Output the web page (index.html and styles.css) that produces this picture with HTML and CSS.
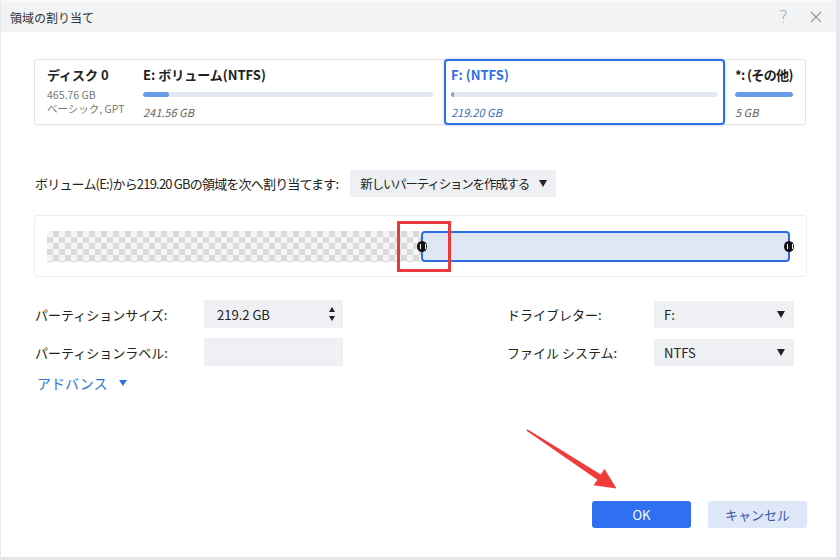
FILE: index.html
```html
<!DOCTYPE html>
<html lang="ja">
<head>
<meta charset="utf-8">
<link rel="stylesheet" href="styles.css">
</head>
<body>
<div class="window">
  <div class="titlebar">
    <span class="title">領域の割り当て</span>
    <div class="tb-icons">
      <span class="help">?</span>
      <svg class="close" width="12" height="12" viewBox="0 0 12 12"><path d="M1 1L11 11M11 1L1 11" stroke="#9a9a9a" stroke-width="1.2" fill="none"/></svg>
    </div>
  </div>
  <div class="content">
    <div class="disk-card">
      <div class="col disk-info">
        <div class="d-title">ディスク 0</div>
        <div class="d-sub">465.76 GB</div>
        <div class="d-sub">ベーシック, GPT</div>
      </div>
      <div class="col part part-e">
        <div class="p-title">E: ボリューム(NTFS)</div>
        <div class="bar"><div class="fill" style="width:9%"></div></div>
        <div class="p-size">241.56 GB</div>
      </div>
      <div class="col part part-f">
        <div class="p-title">F: (NTFS)</div>
        <div class="bar"><div class="fill thin" style="width:1%"></div></div>
        <div class="p-size">219.20 GB</div>
      </div>
      <div class="col part part-o">
        <div class="p-title">*: (その他)</div>
        <div class="bar"><div class="fill" style="width:100%"></div></div>
        <div class="p-size">5 GB</div>
      </div>
    </div>

    <div class="alloc-row">
      <span class="alloc-label">ボリューム(E:)から219.20 GBの領域を次へ割り当てます:</span>
      <div class="select alloc-select"><span class="sel-text">新しいパーティションを作成する</span><span class="caret"></span></div>
    </div>

    <div class="slider-panel">
      <div class="free-area"></div>
      <div class="part-area">
        <span class="handle left"></span>
        <span class="handle right"></span>
      </div>
      <div class="annot-box"></div>
    </div>

    <div class="form">
      <span class="f-label">パーティションサイズ:</span>
      <div class="input spin"><span>219.2 GB</span>
        <span class="spinner"><span class="up"></span><span class="down"></span></span>
      </div>
      <span></span>
      <span class="f-label">ドライブレター:</span>
      <div class="select"><span>F:</span><span class="caret"></span></div>

      <span class="f-label">パーティションラベル:</span>
      <div class="input"></div>
      <span></span>
      <span class="f-label">ファイル システム:</span>
      <div class="select"><span>NTFS</span><span class="caret"></span></div>
    </div>

    <div class="advanced">アドバンス <span class="adv-caret"></span></div>

    <div class="buttons">
      <button class="btn ok">OK</button>
      <button class="btn cancel">キャンセル</button>
    </div>

    <svg class="arrow" width="110" height="80" viewBox="0 0 110 80">
      <polygon points="7.4,9.2 80.8,54.4 84.5,49 96.5,68.5 73.6,65.3 77.4,59.8 6.6,10.8" fill="#f03b3b"/>
    </svg>
  </div>
</div>
</body>
</html>
```

FILE: styles.css
```css
* { box-sizing: border-box; }
html, body { margin: 0; padding: 0; }
body {
  width: 840px;
  height: 560px;
  background: #e6e7ea;
  font-family: "Noto Sans CJK JP", "Noto Sans", sans-serif;
  color: #222;
  overflow: hidden;
}
.window {
  width: 835px;
  height: 557px;
  margin-left: 1px;
  background: #fff;
  position: relative;
}
.titlebar {
  height: 32px;
  background: #f2f3f5;
  border-top: 2px solid #f7f8f9;
  display: flex;
  align-items: center;
  justify-content: space-between;
  padding: 0 14px 0 9px;
}
.title { font-size: 12px; color: #333; }
.tb-icons { display: flex; align-items: center; gap: 22px; }
.help { font-size: 17px; color: #a0a0a0; font-family: "DejaVu Sans", sans-serif; font-weight: 300; }
.content {
  padding: 27px 0 0 33px;
  position: relative;
  height: 525px;
}
.disk-card {
  width: 772px;
  height: 66px;
  border: 1px solid #e1e3e6;
  border-radius: 3px;
  display: grid;
  grid-template-columns: 108px 301px 281px 1fr;
  box-shadow: 0 1px 2px rgba(0,0,0,0.04);
}
.col { padding-top: 6px; white-space: nowrap; }
.disk-info { padding-left: 12px; }
.d-title, .p-title { font-size: 13px; font-weight: 700; line-height: 18px; color: #222; }
.d-sub { font-size: 10.5px; line-height: 14px; height: 14px; color: #777; overflow: visible; }
.d-title + .d-sub { margin-top: 4px; }
.bar { height: 5px; background: #e3e8f1; border-radius: 3px; margin-top: 8px; overflow: hidden; }
.fill { height: 100%; background: #6b9ae6; border-radius: 3px; }
.fill.thin { background: #8a9ab5; min-width: 2px; }
.p-size { font-size: 11px; font-style: italic; color: #666; line-height: 16px; margin-top: 7px; }
.part-e { padding-right: 11px; }
.part-f {
  margin: -1px 0;
  border: 2px solid #2f6fe3;
  border-radius: 4px;
  padding: 5px 5px 0 5px;
  box-shadow: 0 0 3px rgba(47,111,227,0.35);
}
.part-f .p-title { color: #2f6fe3; }
.part-f .p-size { color: #3d6db8; }
.part-o { padding-left: 10px; }
.part-o .p-title { letter-spacing: -0.6px; }
.part-o .bar { width: 58px; }

.alloc-row {
  margin-top: 45px;
  display: flex;
  align-items: center;
  gap: 12px;
  height: 27px;
}
.alloc-label { font-size: 13px; color: #222; letter-spacing: -0.8px; padding-left: 1px; white-space: nowrap; }
.select {
  background: #eef0f3;
  height: 27px;
  display: flex;
  align-items: center;
  justify-content: space-between;
  padding: 0 9px 0 10px;
  font-size: 13px;
  color: #222;
  white-space: nowrap;
}
.alloc-select { width: 206px; }
.sel-text { font-size: 12.5px; letter-spacing: -1.2px; }
.caret {
  width: 0; height: 0;
  border-left: 4px solid transparent;
  border-right: 4px solid transparent;
  border-top: 7px solid #222;
}

.slider-panel {
  margin-top: 18px;
  width: 773px;
  height: 62px;
  border: 1px solid #eceef0;
  border-radius: 3px;
  display: flex;
  padding: 15px 16px 0 12px;
  position: relative;
}
.free-area {
  width: 374px;
  height: 31px;
  background-color: #f4f4f4;
  background-image:
    conic-gradient(#dadada 25%, transparent 0 50%, #dadada 0 75%, transparent 0);
  background-size: 12px 12px;
}
.part-area {
  flex: 1;
  height: 31px;
  background: #dfe6f4;
  border: 2px solid #2e6be6;
  border-radius: 4px;
  position: relative;
}
.handle {
  position: absolute;
  top: 50%;
  width: 10px;
  height: 11px;
  margin-top: -5.5px;
  border-radius: 50%;
  background: #111;
}
.handle::after {
  content: "";
  position: absolute;
  left: 3px;
  top: 3px;
  width: 4px;
  height: 5px;
  border-left: 1px solid #fff;
  border-right: 1px solid #fff;
}
.handle.left { left: -6px; }
.handle.right { right: -6px; }
.annot-box {
  position: absolute;
  left: 362px;
  top: 5px;
  width: 54px;
  height: 51px;
  border: 3px solid #e8393b;
}

.form {
  margin-top: 23px;
  display: grid;
  grid-template-columns: 169px 139px 164px 147px 140px;
  grid-auto-rows: 28px;
  row-gap: 10px;
  align-items: center;
  padding-left: 1px;
}
.f-label { font-size: 13px; color: #222; white-space: nowrap; }
.input {
  height: 28px;
  background: #eef0f3;
  display: flex;
  align-items: center;
  justify-content: space-between;
  padding: 0 8px 0 13px;
  font-size: 13px;
}
.form .select { height: 27px; }
.spinner { display: flex; flex-direction: column; gap: 4px; }
.spinner .up, .spinner .down {
  width: 0; height: 0;
  border-left: 3px solid transparent;
  border-right: 3px solid transparent;
}
.spinner .up { border-bottom: 5px solid #222; }
.spinner .down { border-top: 5px solid #222; }

.advanced {
  margin-top: 7px;
  margin-left: 3px;
  font-size: 14px;
  color: #2f73d6;
  line-height: 20px;
  display: flex;
  align-items: center;
}
.adv-caret {
  display: inline-block;
  margin-left: 12px;
  width: 0; height: 0;
  border-left: 4px solid transparent;
  border-right: 4px solid transparent;
  border-top: 6px solid #2f73d6;
}

.buttons {
  position: absolute;
  left: 591px;
  top: 469px;
  display: flex;
  gap: 17px;
}
.btn {
  width: 99px;
  height: 27px;
  border: none;
  border-radius: 3px;
  font-family: "Noto Sans CJK JP", "Noto Sans", sans-serif;
  font-size: 13px;
}
.btn.ok { background: #2f6ff2; color: #fff; }
.btn.cancel { background: #dde7f8; color: #3b5aa5; }
.arrow {
  position: absolute;
  left: 519px;
  top: 388px;
}
```
